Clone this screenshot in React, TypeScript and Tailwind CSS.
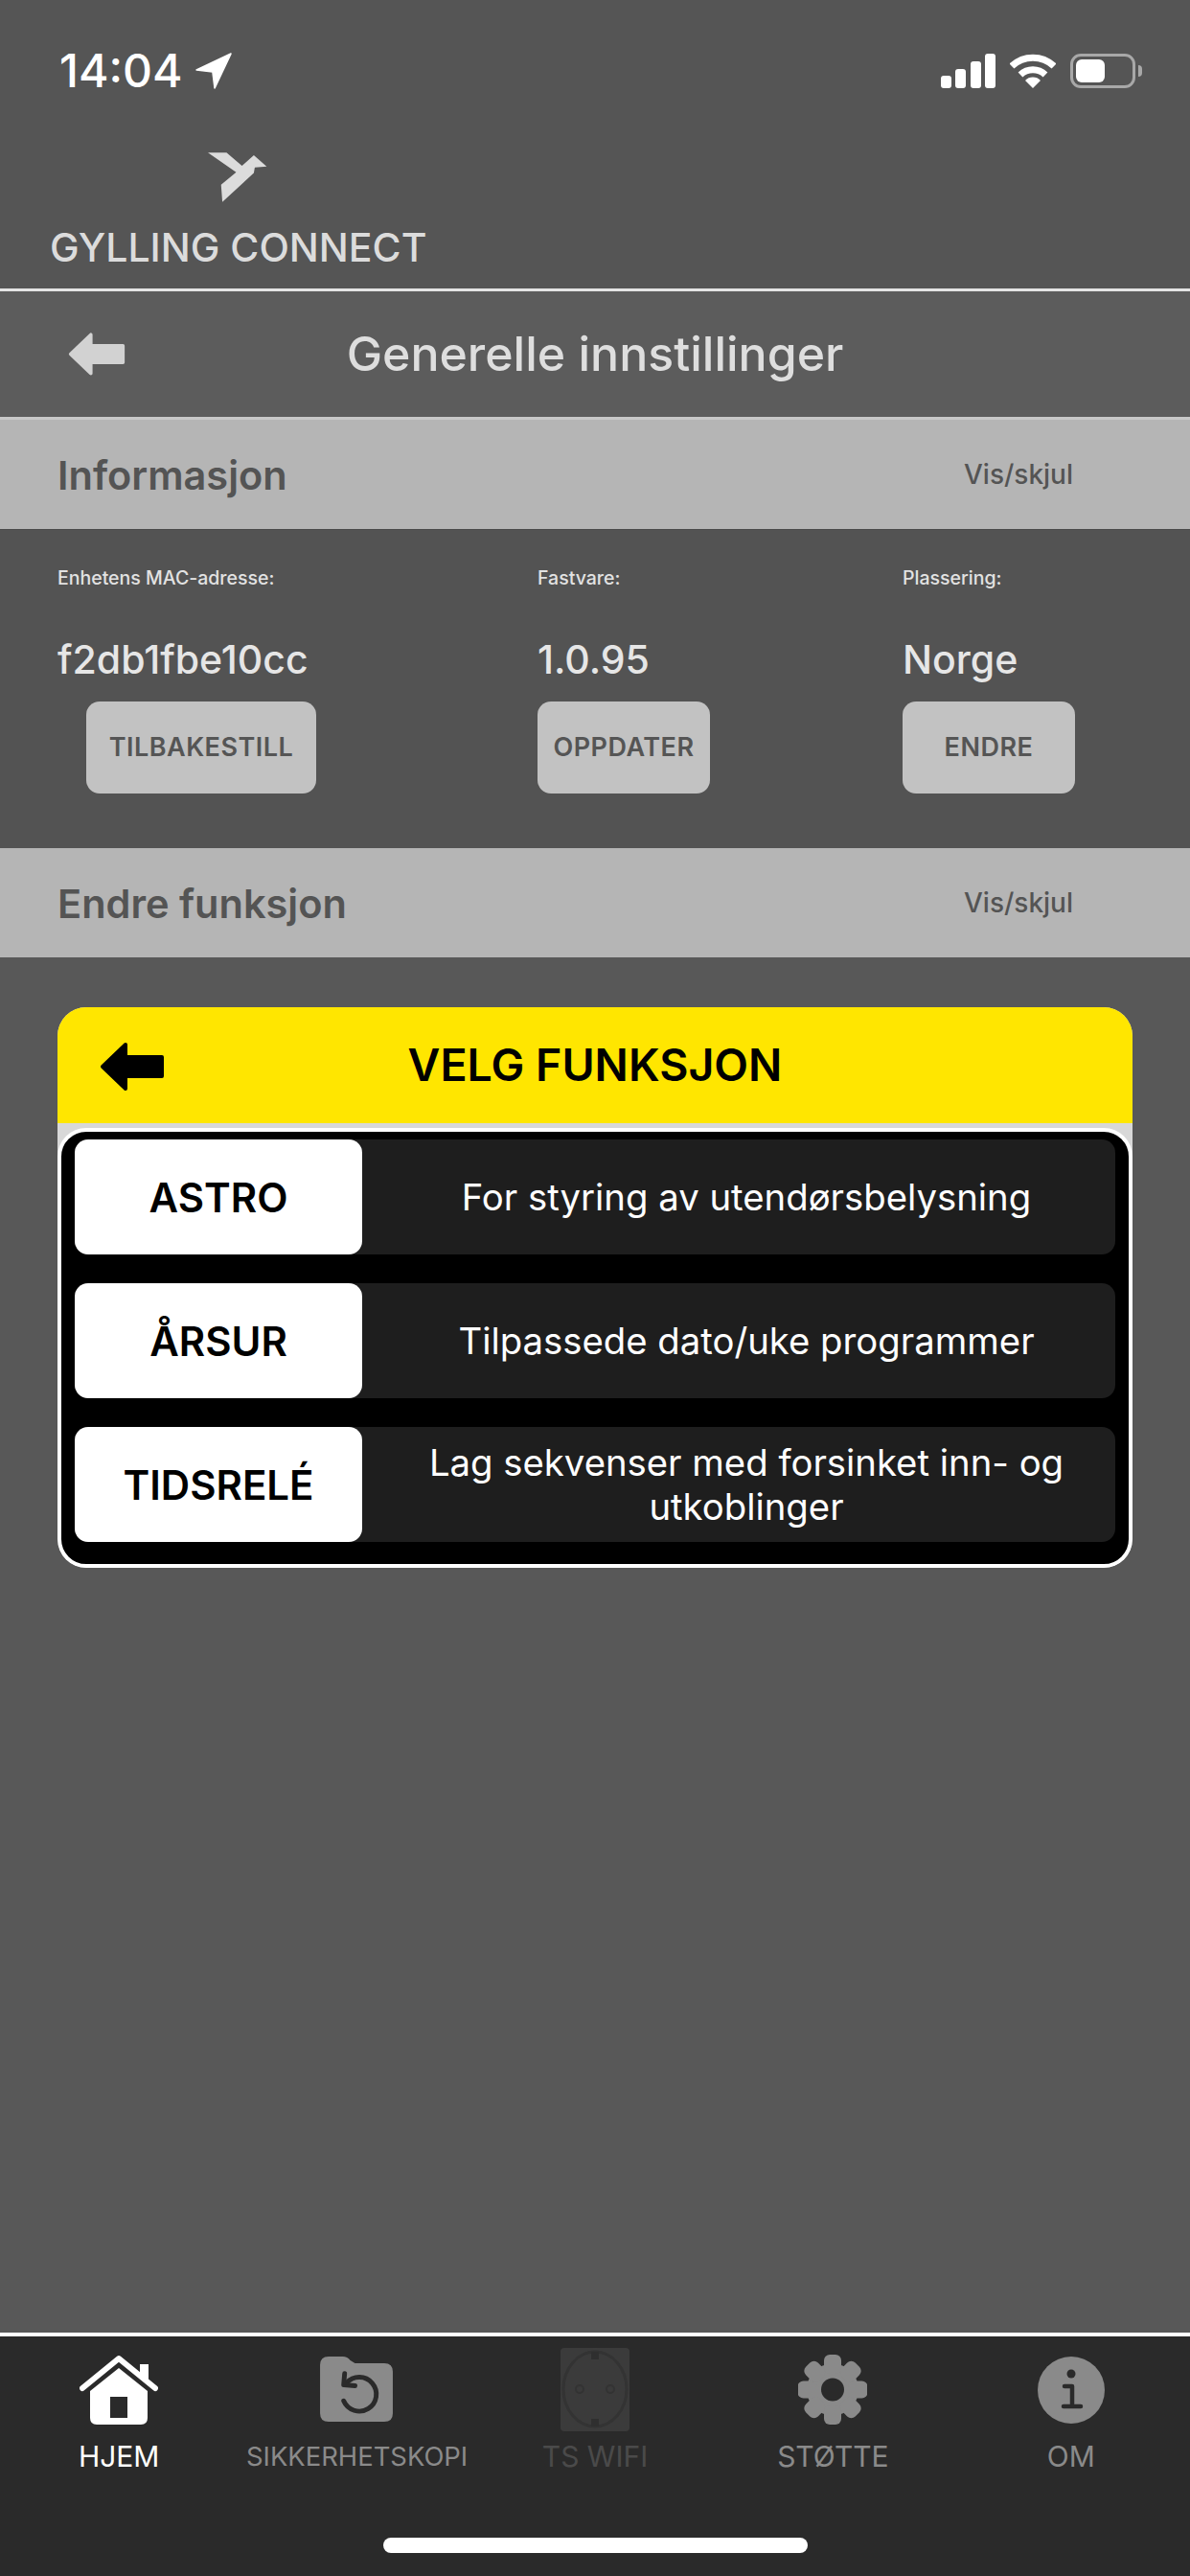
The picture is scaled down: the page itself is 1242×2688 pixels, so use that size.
import React from "react";

function BackArrow({ color, className }: { color: string; className: string }) {
    return (
        <svg viewBox="0 0 68 52" className={className}>
            <path d="M3 26 L27 3 L27 16 L65 16 L65 36 L27 36 L27 49 Z" fill={color} stroke={color} strokeWidth="4" strokeLinejoin="round" />
        </svg>
    );
}

function SectionBar({ title }: { title: string }) {
    return (
        <div className="h-[114px] bg-[#b5b5b5] flex items-center justify-between pl-[60px] pr-[122px]">
            <span className="pt-[2px] text-[41.5px] font-semibold text-[#545454]">{title}</span>
            <span className="text-[28px] font-medium text-[#545454]">Vis/skjul</span>
        </div>
    );
}

function InfoColumn({ label, value, button, className, buttonClass }: { label: string; value: string; button: string; className: string; buttonClass: string }) {
    return (
        <div className={`flex flex-col ${className}`}>
            <span className="text-[19.5px] leading-[20px] font-medium text-[#e2e2e2]">{label}</span>
            <span className="mt-[52px] text-[41px] leading-[46px] font-medium text-[#e6e6e6]">{value}</span>
            <button className={`mt-[21px] h-[96px] rounded-[14px] bg-[#c2c2c2] text-[27px] font-semibold tracking-[0.5px] text-[#555555] whitespace-nowrap ${buttonClass}`}>{button}</button>
        </div>
    );
}

function FunctionRow({ name, text }: { name: string; text: React.ReactNode }) {
    return (
        <div className="h-[120px] flex rounded-[14px] bg-[#1e1e1e]">
            <div className="w-[300px] rounded-[14px] bg-white flex items-center justify-center text-[42px] font-semibold text-black">{name}</div>
            <div className="flex-1 flex items-center justify-center text-center text-[38.3px] leading-[46px] text-white pl-[56px] pr-[40px]">{text}</div>
        </div>
    );
}

function HomeIcon() {
    return (
        <svg viewBox="0 0 82 73" className="w-[82px] h-[73px]">
            <path d="M3 35 L41 4 L79 35" fill="none" stroke="#fff" strokeWidth="6" strokeLinecap="round" strokeLinejoin="round" />
            <path d="M63 10 H72 V28 L63 20 Z" fill="#fff" />
            <path fillRule="evenodd" d="M41 14 L71 38 V66 Q71 73 64 73 H18 Q11 73 11 66 V38 Z M32 44 V66 H50 V44 Z" fill="#fff" />
        </svg>
    );
}

function FolderIcon() {
    return (
        <svg viewBox="0 0 78 70" className="w-[77px] h-[69px]">
            <path d="M0 9 Q0 0 9 0 H24 Q29 0 32 4 L37 7 H68 Q77 7 77 16 V60 Q77 69 68 69 H9 Q0 69 0 60 Z" fill="#8a8a8a" />
            <path d="M28 28 A18 18 0 1 1 25 47" fill="none" stroke="#2a2a2a" strokeWidth="5" strokeLinecap="round" />
            <path d="M26 18 L25 30 L37 31" fill="none" stroke="#2a2a2a" strokeWidth="5" strokeLinecap="round" strokeLinejoin="round" />
        </svg>
    );
}

function SocketIcon() {
    return (
        <svg viewBox="0 0 72 87" className="w-[72px] h-[87px]">
            <rect width="72" height="87" rx="4" fill="#3b3b3b" />
            <ellipse cx="36" cy="43" rx="33" ry="39" fill="none" stroke="#333333" strokeWidth="3" />
            <circle cx="20" cy="43" r="4" fill="none" stroke="#333333" strokeWidth="2" />
            <circle cx="52" cy="43" r="4" fill="none" stroke="#333333" strokeWidth="2" />
            <rect x="32" y="4" width="8" height="8" fill="#2f2f2f" />
            <rect x="32" y="74" width="8" height="8" fill="#2f2f2f" />
        </svg>
    );
}

function GearIcon() {
    const teeth = [0, 45, 90, 135, 180, 225, 270, 315];
    return (
        <svg viewBox="0 0 72 73" className="w-[72px] h-[73px]">
            <circle cx="36" cy="36.5" r="27" fill="#8a8a8a" />
            {teeth.map((a) => (
                <rect key={a} x="27" y="0" width="18" height="20" rx="6" fill="#8a8a8a" transform={`rotate(${a} 36 36.5)`} />
            ))}
            <circle cx="36" cy="36.5" r="12" fill="#2a2a2a" />
        </svg>
    );
}

function InfoIcon() {
    return (
        <svg viewBox="0 0 70 70" className="w-[70px] h-[70px]">
            <circle cx="35" cy="35" r="35" fill="#8a8a8a" />
            <circle cx="35" cy="18" r="4.5" fill="#2a2a2a" />
            <path d="M28 31 H36 V52 M27 52 H45" fill="none" stroke="#2a2a2a" strokeWidth="4.5" strokeLinecap="round" strokeLinejoin="round" />
        </svg>
    );
}

function Tab({ icon, label, labelClass }: { icon: React.ReactNode; label: string; labelClass: string }) {
    return (
        <div className="flex flex-col items-center">
            <div className="h-[87px] flex items-center justify-center">{icon}</div>
            <span className={`mt-[9px] leading-[34px] whitespace-nowrap ${labelClass}`}>{label}</span>
        </div>
    );
}

export default function App() {
    return (
        <div className="w-[1242px] h-[2688px] flex flex-col bg-[#585858] overflow-hidden [font-family:Inter,sans-serif]">
            {/* Header */}
            <div className="h-[301px] bg-[#555555] flex flex-col">
                <div className="flex items-center justify-between pl-[62px] pr-[50px] pt-[40px] h-[107px]">
                    <div className="flex items-center gap-[14px]">
                        <span className="text-[48px] leading-[46px] font-medium text-white">14:04</span>
                        <svg viewBox="0 0 36 36" className="w-[38px] h-[38px]">
                            <path d="M35 1 L1 17 L17 19 L19 35 Z" fill="#fff" stroke="#fff" strokeWidth="1.5" strokeLinejoin="round" />
                        </svg>
                    </div>
                    <div className="flex items-center gap-[15px]">
                        <svg viewBox="0 0 57 36" className="w-[57px] h-[36px]">
                            <rect x="0" y="23" width="11" height="13" rx="3" fill="#fff" />
                            <rect x="15" y="16" width="11" height="20" rx="3" fill="#fff" />
                            <rect x="31" y="8" width="11" height="28" rx="3" fill="#fff" />
                            <rect x="46" y="0" width="11" height="36" rx="3" fill="#fff" />
                        </svg>
                        <svg viewBox="0 0 48 36" className="w-[48px] h-[36px]">
                            <path d="M2 13 A32 32 0 0 1 46 13" fill="none" stroke="#fff" strokeWidth="7" />
                            <path d="M11 22 A19 19 0 0 1 37 22" fill="none" stroke="#fff" strokeWidth="7" />
                            <path d="M16 28 A11 11 0 0 1 32 28 L24 36 Z" fill="#fff" />
                        </svg>
                        <div className="flex items-center gap-[3px]">
                            <div className="w-[68px] h-[36px] rounded-[11px] border-[3px] border-[#a8a8a8] p-[3px]">
                                <div className="w-[30px] h-full rounded-[6px] bg-white"></div>
                            </div>
                            <div className="w-[4px] h-[12px] rounded-r-[4px] bg-[#a8a8a8]"></div>
                        </div>
                    </div>
                </div>
                <div className="w-fit ml-[52px] mt-[50px] flex flex-col items-center">
                    <svg viewBox="106 80 200 170" className="w-[67px] h-[57px]">
                        <path d="M112 87 H170 L218 128 L255 95 L295 130 L258 133 L255 150 L157 240 L153 187 L200 148 Z" fill="#dcdcdc" />
                    </svg>
                    <span className="mt-[21px] text-[41px] leading-[46px] font-medium text-[#dcdcdc] whitespace-nowrap">GYLLING CONNECT</span>
                </div>
            </div>
            <div className="h-[3px] bg-[#e4e4e4]"></div>

            {/* Title */}
            <div className="h-[131px] bg-[#5c5c5c] flex items-center relative">
                <BackArrow color="#d2d2d2" className="absolute left-[71px] top-[42px] w-[60px] h-[47px]" />
                <h1 className="w-full text-center text-[50px] font-medium text-[#dedede]">Generelle innstillinger</h1>
            </div>
            <div className="h-[3px] bg-[#c8c8c8]"></div>

            <SectionBar title="Informasjon" />

            {/* Device info */}
            <div className="h-[333px] bg-[#535353] pt-[40px] pl-[60px] flex border-t border-[#4a4a4a]">
                <InfoColumn className="w-[501px]" buttonClass="ml-[30px] w-[240px]" label="Enhetens MAC-adresse:" value="f2db1fbe10cc" button="TILBAKESTILL" />
                <InfoColumn className="w-[381px]" buttonClass="w-[180px]" label="Fastvare:" value="1.0.95" button="OPPDATER" />
                <InfoColumn className="w-[180px]" buttonClass="w-[180px]" label="Plassering:" value="Norge" button="ENDRE" />
            </div>

            <SectionBar title="Endre funksjon" />

            {/* Function picker */}
            <div className="mt-[52px] mx-[60px] rounded-[30px] overflow-hidden bg-[#d8d8d8]">
                <div className="h-[121px] bg-[#ffe600] flex items-center relative">
                    <BackArrow color="#000000" className="absolute left-[44px] top-[36px] w-[68px] h-[52px]" />
                    <h2 className="w-full text-center text-[46.5px] font-semibold text-black">VELG FUNKSJON</h2>
                </div>
                <div className="pt-[5px]">
                    <div className="rounded-[30px] border-[4px] border-white bg-black pt-[8px] pb-[23px] pl-[14px] pr-[14px] flex flex-col gap-[30px]">
                        <FunctionRow name="ASTRO" text="For styring av utendørsbelysning" />
                        <FunctionRow name="ÅRSUR" text="Tilpassede dato/uke programmer" />
                        <FunctionRow name="TIDSRELÉ" text="Lag sekvenser med forsinket inn- og utkoblinger" />
                    </div>
                </div>
            </div>

            {/* Bottom nav */}
            <div className="mt-auto h-[4px] bg-white"></div>
            <div className="h-[250px] bg-[#2a2a2a] flex flex-col">
                <div className="grid grid-cols-5 pt-[12px]">
                    <Tab icon={<HomeIcon />} label="HJEM" labelClass="text-[30px] text-white" />
                    <Tab icon={<FolderIcon />} label="SIKKERHETSKOPI" labelClass="text-[27.4px] text-[#8a8a8a]" />
                    <Tab icon={<SocketIcon />} label="TS WIFI" labelClass="text-[30px] text-[#4a4a4a]" />
                    <Tab icon={<GearIcon />} label="STØTTE" labelClass="text-[30px] text-[#8a8a8a]" />
                    <Tab icon={<InfoIcon />} label="OM" labelClass="text-[30px] text-[#8a8a8a]" />
                </div>
                <div className="mt-auto mb-[24px] mx-auto w-[443px] h-[16px] rounded-full bg-white"></div>
            </div>
        </div>
    );
}
